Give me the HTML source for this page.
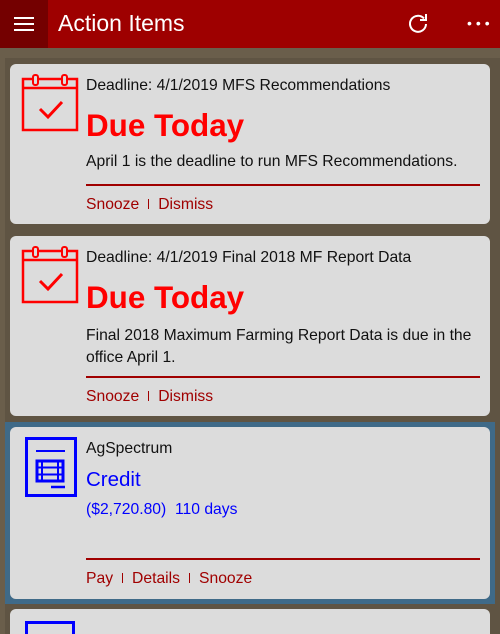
<!DOCTYPE html>
<html><head><style>
*{margin:0;padding:0;box-sizing:border-box}
html,body{width:500px;height:634px;overflow:hidden}
body{background:#6a5e4b;font-family:"Segoe UI","Liberation Sans",sans-serif;position:relative}
.hdr{position:absolute;left:0;top:0;width:500px;height:48px;background:#9e0000;color:#fff}
.hb{position:absolute;left:0;top:0;width:48px;height:48px;background:#740000}
.hb i{position:absolute;left:14px;width:20px;height:2px;background:#fff}
.title{position:absolute;left:58px;top:10px;font-size:23px}
.card{position:absolute;left:10px;width:480px;background:#dcdcdc;border-radius:6px;overflow:hidden}
.t{position:absolute;left:76px;font-size:15.7px;color:#111;white-space:nowrap}
.big{position:absolute;left:76px;font-size:31.4px;font-weight:bold;color:#f00}
.line{position:absolute;left:76px;width:394px;height:2px;background:#a00000}
.lk{position:absolute;left:76px;font-size:15.7px;color:#a00000;white-space:nowrap}
.lk s{text-decoration:none;display:inline-block;width:1px;height:10px;background:#a00000;margin:0 9px}
.blue{color:#0000ff}
</style></head><body>
<div class="hdr"><div class="hb"><i style="top:17px"></i><i style="top:23px"></i><i style="top:29px"></i></div>
<div class="title">Action Items</div>
<svg style="position:absolute;left:406px;top:12px" width="24" height="24" viewBox="0 0 24 24"><path d="M18 6.5A8 8 0 1 0 20 12" fill="none" stroke="#fff" stroke-width="2"/><path d="M20 2v6h-6" fill="none" stroke="#fff" stroke-width="2"/></svg>
<div style="position:absolute;left:467px;top:15px;color:#fff;font-size:14px;letter-spacing:4px">&#8226;&#8226;&#8226;</div>
</div>
<div style="position:absolute;left:5px;top:58px;width:495px;height:576px;background:#5f5443"></div>

<div class="card" style="top:64px;height:160px">
<svg style="position:absolute;left:11px;top:9px" width="58" height="60" viewBox="0 0 58 60"><rect x="2" y="6" width="54" height="51" fill="none" stroke="#f00" stroke-width="2.5"/><line x1="2" y1="15" x2="56" y2="15" stroke="#f00" stroke-width="2.5"/><rect x="12" y="2" width="5" height="10" rx="2" fill="#dcdcdc" stroke="#f00" stroke-width="2"/><rect x="41" y="2" width="5" height="10" rx="2" fill="#dcdcdc" stroke="#f00" stroke-width="2"/><path d="M19 36l8 8 14-15" fill="none" stroke="#f00" stroke-width="3"/></svg>
<div class="t" style="top:13px">Deadline: 4/1/2019 MFS Recommendations</div>
<div class="big" style="top:44px">Due Today</div>
<div class="t" style="top:89px">April 1 is the deadline to run MFS Recommendations.</div>
<div class="line" style="top:120px"></div>
<div class="lk" style="top:132px">Snooze<s></s>Dismiss</div>
</div>

<div class="card" style="top:236px;height:180px">
<svg style="position:absolute;left:11px;top:9px" width="58" height="60" viewBox="0 0 58 60"><rect x="2" y="6" width="54" height="51" fill="none" stroke="#f00" stroke-width="2.5"/><line x1="2" y1="15" x2="56" y2="15" stroke="#f00" stroke-width="2.5"/><rect x="12" y="2" width="5" height="10" rx="2" fill="#dcdcdc" stroke="#f00" stroke-width="2"/><rect x="41" y="2" width="5" height="10" rx="2" fill="#dcdcdc" stroke="#f00" stroke-width="2"/><path d="M19 36l8 8 14-15" fill="none" stroke="#f00" stroke-width="3"/></svg>
<div class="t" style="top:13px">Deadline: 4/1/2019 Final 2018 MF Report Data</div>
<div class="big" style="top:44px">Due Today</div>
<div class="t" style="top:89px;line-height:22px">Final 2018 Maximum Farming Report Data is due in the<br>office April 1.</div>
<div class="line" style="top:140px"></div>
<div class="lk" style="top:152px">Snooze<s></s>Dismiss</div>
</div>

<div style="position:absolute;left:5px;top:422px;width:490px;height:182px;background:#3f6a88"></div>
<div class="card" style="top:427px;height:172px">
<svg style="position:absolute;left:15px;top:10px" width="52" height="60" viewBox="0 0 52 60"><rect x="1.5" y="1.5" width="49" height="57" fill="none" stroke="#00f" stroke-width="3"/><line x1="11" y1="14" x2="40" y2="14" stroke="#00f" stroke-width="2"/><rect x="12" y="24" width="26" height="20" fill="none" stroke="#00f" stroke-width="3"/><line x1="12" y1="30.5" x2="38" y2="30.5" stroke="#00f" stroke-width="2"/><line x1="12" y1="37.5" x2="38" y2="37.5" stroke="#00f" stroke-width="2"/><line x1="17" y1="24" x2="17" y2="44" stroke="#00f" stroke-width="2"/><line x1="33" y1="24" x2="33" y2="44" stroke="#00f" stroke-width="2"/><line x1="26" y1="50" x2="40" y2="50" stroke="#00f" stroke-width="2.5"/></svg>
<div class="t" style="top:13px">AgSpectrum</div>
<div class="t blue" style="top:41px;font-size:20.5px">Credit</div>
<div class="t blue" style="top:74px">($2,720.80)&nbsp; 110 days</div>
<div class="line" style="top:131px"></div>
<div class="lk" style="top:143px">Pay<s></s>Details<s></s>Snooze</div>
</div>

<div class="card" style="top:609px;height:40px"><div style="position:absolute;left:15px;top:12px;width:50px;height:40px;border:3px solid #00f"></div></div>
</body></html>
